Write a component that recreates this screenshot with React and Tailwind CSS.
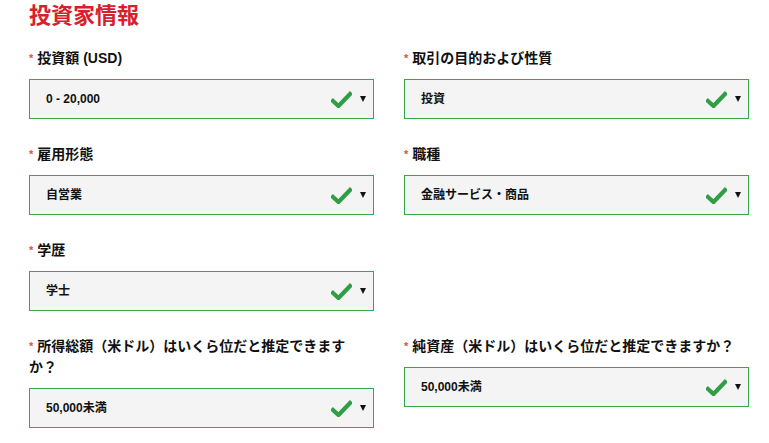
const FONT = { fontFamily: '"Liberation Sans", "Noto Sans CJK JP", sans-serif' };

function Check() {
  return (
    <svg width="21" height="17" viewBox="0 0 21 17" className="shrink-0">
      <path
        d="M2 10 L7.5 15 L19 3"
        fill="none"
        stroke="#2f9e44"
        strokeWidth="4.2"
        strokeLinecap="square"
        strokeLinejoin="miter"
      />
    </svg>
  );
}

function SelectField({ label, value, narrow }) {
  return (
    <div className="flex flex-col">
      <label
        className={`text-[14px] leading-[21px] font-bold text-[#111] mb-[10px] ${narrow ? "pr-[24px]" : ""}`}
      >
        <span className="text-[#e0503f] text-[11px] mr-[4px] align-[1px]">*</span>
        {label}
      </label>
      <div className="h-[40px] border border-[#3aa54a] bg-[#f4f4f4] flex items-center pl-[16px] pr-[7px]">
        <span className="flex-1 text-[12px] font-bold text-[#111]">{value}</span>
        <Check />
        <span className="ml-[8px] w-0 h-0 border-l-[3px] border-r-[3px] border-t-[6px] border-l-transparent border-r-transparent border-t-[#111]" />
      </div>
    </div>
  );
}

export default function App() {
  return (
    <div className="w-[769px] h-[443px] bg-white overflow-hidden pl-[29px] pr-[20px]" style={FONT}>
      <h1 className="text-[22px] leading-[32px] font-bold text-[#d7202a]">投資家情報</h1>

      <div className="grid grid-cols-[345px_345px] gap-x-[30px] mt-[16px]">
        <div className="flex flex-col gap-[25px]">
          <SelectField label="投資額 (USD)" value="0 - 20,000" />
          <SelectField label="雇用形態" value="自営業" />
          <SelectField label="学歴" value="学士" />
          <SelectField label="所得総額（米ドル）はいくら位だと推定できますか？" value="50,000未満" narrow />
        </div>
        <div className="flex flex-col gap-[25px]">
          <SelectField label="取引の目的および性質" value="投資" />
          <SelectField label="職種" value="金融サービス・商品" />
          <div className="h-[71px]" />
          <SelectField label="純資産（米ドル）はいくら位だと推定できますか？" value="50,000未満" />
        </div>
      </div>
    </div>
  );
}
